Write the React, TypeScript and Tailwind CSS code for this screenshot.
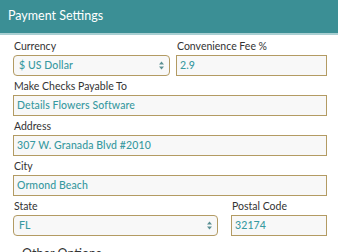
import React from "react";

const Arrows = () => (
  <svg width="7" height="11" viewBox="0 0 7 11" className="shrink-0">
    <path d="M3.5 1.5 L6 4.5 L1 4.5 Z" fill="#5a8f93" />
    <path d="M3.5 9.5 L6 6.5 L1 6.5 Z" fill="#5a8f93" />
  </svg>
);

const Label = ({ children }: { children: React.ReactNode }) => (
  <div className="text-[10.5px] leading-[15px] text-[#333333] pl-[1px] mb-[1px]">{children}</div>
);

const Input = ({ value, w }: { value: string; w: string }) => (
  <div
    className={`${w} h-[21px] border-[1.5px] border-[#b39b63] bg-[#f8f8f8] flex items-center pl-[3px] text-[10.5px] text-[#3799a0] font-medium tracking-[0.1px]`}
  >
    {value}
  </div>
);

const Select = ({ value, w }: { value: string; w: string }) => (
  <div
    className={`${w} h-[21px] border-[1.5px] border-[#b39b63] bg-[#f8f8f8] rounded-[4px] flex items-center justify-between pl-[5px] pr-[4px] text-[10.5px] text-[#3799a0] font-medium tracking-[0.1px]`}
  >
    <span>{value}</span>
    <Arrows />
  </div>
);

export default function App() {
  return (
    <div
      className="w-[338px] h-[252px] overflow-hidden bg-white"
      style={{ fontFamily: "Lato, 'Open Sans', sans-serif" }}
    >
      <div className="h-[33px] bg-[#3b8f95] flex items-center pl-[8px] text-white text-[12.5px]">
        Payment Settings
      </div>
      <div className="h-[2px] bg-[#a9cfd2]" />
      <div className="pl-[13px] pt-[4px] flex flex-col gap-[3px]">
        <div className="flex gap-[6px]">
          <div>
            <Label>Currency</Label>
            <Select value="$ US Dollar" w="w-[157px]" />
          </div>
          <div>
            <Label>Convenience Fee %</Label>
            <Input value="2.9" w="w-[151px]" />
          </div>
        </div>
        <div>
          <Label>Make Checks Payable To</Label>
          <Input value="Details Flowers Software" w="w-[314px]" />
        </div>
        <div>
          <Label>Address</Label>
          <Input value="307 W. Granada Blvd #2010" w="w-[314px]" />
        </div>
        <div>
          <Label>City</Label>
          <Input value="Ormond Beach" w="w-[314px]" />
        </div>
        <div className="flex gap-[13px]">
          <div>
            <Label>State</Label>
            <Select value="FL" w="w-[205px]" />
          </div>
          <div>
            <Label>Postal Code</Label>
            <Input value="32174" w="w-[96px]" />
          </div>
        </div>
        <div className="pl-[9px] pt-[8px] text-[12.5px] leading-[14px] text-[#333333]">Other Options</div>
      </div>
    </div>
  );
}
